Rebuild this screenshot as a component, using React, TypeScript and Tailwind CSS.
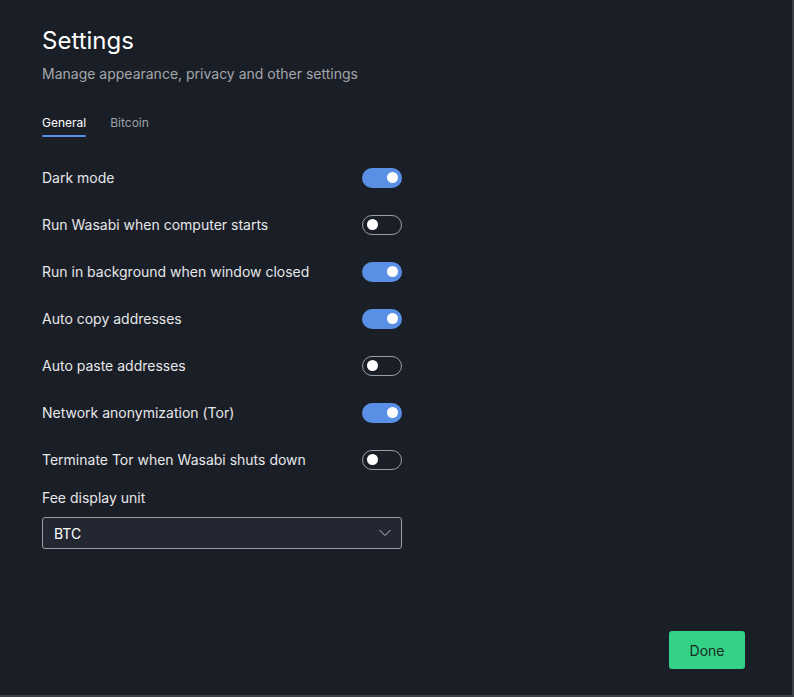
import React, { useState } from "react";

type Fila = { id: string; label: string; on: boolean };

const filasIniciales: Fila[] = [
  { id: "dark", label: "Dark mode", on: true },
  { id: "startup", label: "Run Wasabi when computer starts", on: false },
  { id: "bg", label: "Run in background when window closed", on: true },
  { id: "copy", label: "Auto copy addresses", on: true },
  { id: "paste", label: "Auto paste addresses", on: false },
  { id: "tor", label: "Network anonymization (Tor)", on: true },
  { id: "killtor", label: "Terminate Tor when Wasabi shuts down", on: false },
];

function Toggle({ on, onClick }: { on: boolean; onClick: () => void }) {
  return (
    <button
      onClick={onClick}
      className={`w-10 h-5 rounded-full flex items-center px-[4px] ${
        on ? "bg-[#5a8fe6] justify-end" : "border border-[#9a9ea6] justify-start"
      }`}
    >
      <span className="w-[11px] h-[11px] rounded-full bg-white"></span>
    </button>
  );
}

export default function App() {
  const [filas, setFilas] = useState(filasIniciales);

  return (
    <div
      className="w-[794px] h-[697px] bg-[#1a1e26] border-r-2 border-b-2 border-[#3b3f47] flex flex-col text-[#e6e7e9]"
      style={{ fontFamily: "Inter, 'Noto Sans', sans-serif" }}
    >
      <div className="px-[42px] pt-[25px] flex-1">
        <h1 className="text-[24px] leading-8 text-white">Settings</h1>
        <p className="mt-[6px] text-[14px] text-[#a3a6ab]">Manage appearance, privacy and other settings</p>

        {/* pestañas */}
        <div className="mt-[30px] flex gap-6 text-[12px]">
          <div className="flex flex-col">
            <span className="text-white">General</span>
            <span className="mt-[3px] h-[2px] bg-[#5a8fe6] rounded"></span>
          </div>
          <span className="text-[#9ea1a6]">Bitcoin</span>
        </div>

        <div className="mt-[17px] w-[360px] flex flex-col">
          {filas.map((f) => (
            <div key={f.id} className="h-[47px] flex items-center justify-between">
              <span className="text-[14px]">{f.label}</span>
              <Toggle
                on={f.on}
                onClick={() =>
                  setFilas(filas.map((x) => (x.id === f.id ? { ...x, on: !x.on } : x)))
                }
              />
            </div>
          ))}
        </div>

        <div className="mt-[4px] w-[360px]">
          <div className="text-[14px]">Fee display unit</div>
          <div className="mt-[9px] h-[32px] border border-[#9a9ea6] rounded-[3px] bg-[#222731] flex items-center justify-between pl-[11px] pr-[10px]">
            <span className="text-[14px] text-white">BTC</span>
            <svg width="12" height="8" viewBox="0 0 12 8" fill="none" stroke="#b8bbc0" strokeWidth="1">
              <path d="M0.5 1l5.5 5.5L11.5 1" />
            </svg>
          </div>
        </div>
      </div>

      <div className="flex justify-end pr-[47px] pb-[26px]">
        <button className="w-[76px] h-[38px] rounded-[3px] bg-[#34d287] text-[#1a2a22] text-[14px]">Done</button>
      </div>
    </div>
  );
}
